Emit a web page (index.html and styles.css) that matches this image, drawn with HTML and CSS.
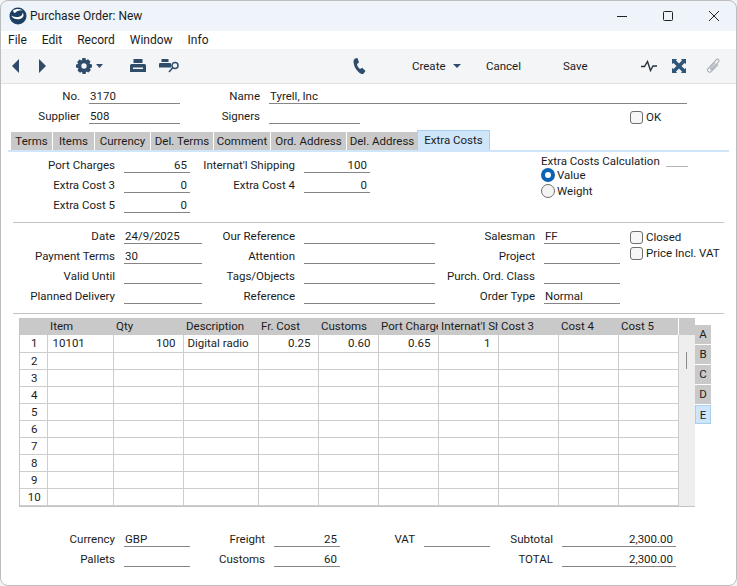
FILE: index.html
```html
<!DOCTYPE html>
<html lang="en">
<head>
    <meta charset="UTF-8">
    <meta name="viewport" content="width=device-width, initial-scale=1.0">
    <title>Purchase Order: New</title>
    <link rel="stylesheet" href="styles.css">
</head>
<body>
    <div class="window">
        <div class="titlebar">
            <svg class="logo" width="18" height="18" viewBox="0 0 18 18">
                <circle cx="9" cy="9" r="8.5" fill="#1d3f63"/>
                <path d="M4 3.500C7 1.500 11 1.500 14.500 3.500C11.500 3 8.500 3.500 6.500 5.500C5.500 6.500 4.500 5.500 4 3.500Z" fill="#fff"/>
                <path d="M2 8.500C4.500 12.500 9.500 13.500 13 11C15 9.500 15 7 13.500 5.500C14 8.500 10.500 10.500 7 10C5 9.700 3.200 9.300 2 8.500Z" fill="#fff"/>
            </svg>
            <span class="title">Purchase Order: New</span>
            <div class="win-btn">
                <svg width="12" height="12" viewBox="0 0 12 12"><path d="M1 6.500H11" stroke="#222" stroke-width="1"/></svg>
            </div>
            <div class="win-btn">
                <svg width="12" height="12" viewBox="0 0 12 12"><rect x="1.500" y="1.500" width="9" height="9" rx="1" fill="none" stroke="#222"/></svg>
            </div>
            <div class="win-btn">
                <svg width="12" height="12" viewBox="0 0 12 12"><path d="M1 1L11 11M11 1L1 11" stroke="#222" stroke-width="1"/></svg>
            </div>
        </div>

        <div class="menubar">
            <span>File</span>
            <span>Edit</span>
            <span>Record</span>
            <span>Window</span>
            <span>Info</span>
        </div>

        <div class="toolbar">
            <svg width="8" height="14" viewBox="0 0 8 14"><path d="M7 0V14L0 7Z" fill="#2f4d6b"/></svg>
            <svg width="8" height="14" viewBox="0 0 8 14"><path d="M0 0V14L7 7Z" fill="#2f4d6b"/></svg>
            <div class="tool-pair">
                <svg width="16" height="16" viewBox="0 0 16 16">
                    <path d="M6.500 0H9.500L10 2.200L12 1.200L14.500 3.500L13.500 5.700L16 6.500V9.500L13.800 10L14.800 12L12.500 14.500L10.300 13.500L9.500 16H6.500L6 13.800L4 14.800L1.500 12.500L2.500 10.300L0 9.500V6.500L2.200 6L1.200 4L3.500 1.500L5.700 2.500Z" fill="#2f4d6b"/>
                    <circle cx="8" cy="8" r="2.700" fill="#f4f5f6"/>
                </svg>
                <svg width="7" height="4" viewBox="0 0 7 4"><path d="M0 0H7L3.500 4Z" fill="#2f4d6b"/></svg>
            </div>
            <svg width="16" height="14" viewBox="0 0 16 14">
                <path d="M3.500 0H12.500V4H3.500ZM1.500 5H14.500Q16 5 16 6.500V13H0V6.500Q0 5 1.500 5Z" fill="#2f4d6b"/>
                <rect x="3" y="8.500" width="10" height="1.500" fill="#f4f5f6"/>
            </svg>
            <svg width="21" height="15" viewBox="0 0 21 15">
                <path d="M2.500 0H9.500V3H2.500ZM1 4H11Q12 4 12 5V8.500H0V5Q0 4 1 4Z" fill="#2f4d6b"/>
                <circle cx="16" cy="6.500" r="3" fill="none" stroke="#2f4d6b" stroke-width="1.500"/>
                <path d="M13.800 8.800L10 13" stroke="#2f4d6b" stroke-width="1.500"/>
            </svg>
            <svg width="13" height="17" viewBox="0 0 13 17">
                <path d="M2 .500L4.500 0L6 4.500L4 6C4.300 8 5.500 10 7 11L9.200 9.800L12.500 13L10.500 15.800C9 16.500 7.500 15.800 5.500 14C2.500 11 .500 7.500 .500 3.500Q.600 1.500 2 .500Z" fill="#2f4d6b"/>
            </svg>
            <div class="tool-pair">
                <span>Create</span>
                <svg class="caret-gap" width="8" height="4" viewBox="0 0 8 4"><path d="M0 0H8L4 4Z" fill="#2f4d6b"/></svg>
            </div>
            <span>Cancel</span>
            <span>Save</span>
            <svg width="16" height="12" viewBox="0 0 16 12"><path d="M0 6.500H3.500L6.500 1.500L9.500 10.500L12 6H16" fill="none" stroke="#26333f" stroke-width="1.400"/></svg>
            <svg width="14" height="14" viewBox="0 0 14 14">
                <path d="M0 0H5L4 1.500L7 4.500L10 1.500L9 0H14V5L12.500 4L9.500 7L12.500 10L14 9V14H9L10 12.500L7 9.500L4 12.500L5 14H0V9L1.500 10L4.500 7L1.500 4L0 5Z" fill="#2f5577"/>
            </svg>
            <svg width="15" height="16" viewBox="0 0 15 16">
                <path d="M9 5L4.500 10C3.800 10.800 4.800 11.800 5.600 11L12.500 3.800C14 2.200 11.800 .2 10.200 1.800L2.200 10.300C.2 12.500 3 15.500 5.200 13.500L12 6.500" fill="none" stroke="#a9b0b7" stroke-width="1.100"/>
            </svg>
        </div>

        <div class="form">
            <div class="grid head-grid">
                <label>No.</label><div class="fld">3170</div>
                <label>Name</label><div class="fld span-3">Tyrell, Inc</div>
                <label>Supplier</label><div class="fld">508</div>
                <label>Signers</label><div class="fld"></div>
                <div></div>
                <div class="check"><i class="box"></i>OK</div>
            </div>

            <div class="tabs">
                <span class="tab">Terms</span>
                <span class="tab">Items</span>
                <span class="tab">Currency</span>
                <span class="tab">Del. Terms</span>
                <span class="tab">Comment</span>
                <span class="tab">Ord. Address</span>
                <span class="tab">Del. Address</span>
                <span class="tab active">Extra Costs</span>
            </div>

            <div class="grid extra-grid">
                <label>Port Charges</label><div class="fld num">65</div>
                <label>Internat'l Shipping</label><div class="fld num">100</div>
                <div class="calc">
                    <div class="calc-title">Extra Costs Calculation<span class="calc-line"></span></div>
                    <div class="radio"><i class="dot on"></i>Value</div>
                    <div class="radio"><i class="dot"></i>Weight</div>
                </div>
                <label>Extra Cost 3</label><div class="fld num">0</div>
                <label>Extra Cost 4</label><div class="fld num">0</div>
                <label>Extra Cost 5</label><div class="fld num">0</div>
            </div>

            <hr class="sep">

            <div class="grid date-grid">
                <label>Date</label><div class="fld">24/9/2025</div>
                <label>Our Reference</label><div class="fld"></div>
                <label>Salesman</label><div class="fld">FF</div>
                <div class="checks">
                    <div class="check"><i class="box"></i>Closed</div>
                    <div class="check"><i class="box"></i>Price Incl. VAT</div>
                </div>
                <label>Payment Terms</label><div class="fld">30</div>
                <label>Attention</label><div class="fld"></div>
                <label>Project</label><div class="fld"></div>
                <label>Valid Until</label><div class="fld"></div>
                <label>Tags/Objects</label><div class="fld"></div>
                <label>Purch. Ord. Class</label><div class="fld"></div>
                <label>Planned Delivery</label><div class="fld"></div>
                <label>Reference</label><div class="fld"></div>
                <label>Order Type</label><div class="fld">Normal</div>
            </div>

            <hr class="sep">

            <div class="matrix">
                <div class="matrix-box">
                    <table>
                        <colgroup>
                            <col class="c-no"><col class="c-item"><col class="c-qty"><col class="c-desc">
                            <col class="c-n"><col class="c-n"><col class="c-n"><col class="c-n">
                            <col class="c-n"><col class="c-n"><col class="c-n">
                        </colgroup>
                        <thead>
                            <tr><th></th><th>Item</th><th>Qty</th><th>Description</th><th>Fr. Cost</th><th>Customs</th><th>Port Charge</th><th>Internat'l Shipping</th><th>Cost 3</th><th>Cost 4</th><th>Cost 5</th></tr>
                        </thead>
                        <tbody>
                            <tr><td class="no">1</td><td class="item">10101</td><td class="r">100</td><td class="desc">Digital radio</td><td class="r">0.25</td><td class="r">0.60</td><td class="r">0.65</td><td class="r">1</td><td></td><td></td><td></td></tr>
                            <tr><td class="no">2</td><td></td><td></td><td></td><td></td><td></td><td></td><td></td><td></td><td></td><td></td></tr>
                            <tr><td class="no">3</td><td></td><td></td><td></td><td></td><td></td><td></td><td></td><td></td><td></td><td></td></tr>
                            <tr><td class="no">4</td><td></td><td></td><td></td><td></td><td></td><td></td><td></td><td></td><td></td><td></td></tr>
                            <tr><td class="no">5</td><td></td><td></td><td></td><td></td><td></td><td></td><td></td><td></td><td></td><td></td></tr>
                            <tr><td class="no">6</td><td></td><td></td><td></td><td></td><td></td><td></td><td></td><td></td><td></td><td></td></tr>
                            <tr><td class="no">7</td><td></td><td></td><td></td><td></td><td></td><td></td><td></td><td></td><td></td><td></td></tr>
                            <tr><td class="no">8</td><td></td><td></td><td></td><td></td><td></td><td></td><td></td><td></td><td></td><td></td></tr>
                            <tr><td class="no">9</td><td></td><td></td><td></td><td></td><td></td><td></td><td></td><td></td><td></td><td></td></tr>
                            <tr><td class="no">10</td><td></td><td></td><td></td><td></td><td></td><td></td><td></td><td></td><td></td><td></td></tr>
                        </tbody>
                    </table>
                    <div class="scroll"><span class="thumb"></span></div>
                </div>
                <div class="side-tabs">
                    <span>A</span>
                    <span>B</span>
                    <span>C</span>
                    <span>D</span>
                    <span class="active">E</span>
                </div>
            </div>

            <div class="grid foot-grid">
                <label>Currency</label><div class="fld">GBP</div>
                <label>Freight</label><div class="fld num">25</div>
                <label>VAT</label><div class="fld"></div>
                <label>Subtotal</label><div class="fld num">2,300.00</div>
                <label>Pallets</label><div class="fld"></div>
                <label>Customs</label><div class="fld num">60</div>
                <div></div><div></div>
                <label>TOTAL</label><div class="fld num">2,300.00</div>
            </div>
        </div>
    </div>
</body>
</html>
```

FILE: styles.css
```css
* {
    box-sizing: border-box;
}
body {
    margin: 0;
    background: #f3f3f3;
    font-family: Roboto, 'Noto Sans', sans-serif;
    font-size: 11.5px;
    color: #1c1c1c;
}
.window {
    width: 737px;
    height: 586px;
    background: #fff;
    border-radius: 8px;
    overflow: hidden;
    outline: 1px solid #bdbdbd;
    outline-offset: -1px;
}
.titlebar {
    display: flex;
    align-items: center;
    height: 31px;
    padding-left: 9px;
    background: #eef4f9;
}
.logo {
    margin-right: 3px;
}
.title {
    flex: 1;
    font-size: 12px;
}
.win-btn {
    display: flex;
    align-items: center;
    justify-content: center;
    width: 46px;
    height: 31px;
}
.menubar {
    display: flex;
    gap: 15px;
    align-items: center;
    height: 18px;
    padding-left: 8px;
    font-size: 12px;
}
.toolbar {
    display: grid;
    grid-template-columns: 27px 37px 54px 29px 194px 59px 74px 77px 78px 31px 34px 20px;
    align-items: center;
    justify-items: start;
    height: 35px;
    padding-left: 12px;
    background: #f4f5f6;
    border-bottom: 1px solid #e2e2e2;
}
.tool-pair {
    display: flex;
    align-items: center;
    gap: 4px;
}
.caret-gap {
    margin-left: 3px;
}
.grid {
    display: grid;
    grid-auto-rows: 20px;
}
.grid label {
    padding: 5px 9px 0 0;
    line-height: 15px;
    text-align: right;
    white-space: nowrap;
}
.fld {
    padding: 5px 0 0 1px;
    line-height: 14px;
    border-bottom: 1px solid #858585;
    white-space: nowrap;
}
.num {
    padding-right: 3px;
    text-align: right;
}
.span-3 {
    grid-column: span 3;
}
.head-grid {
    grid-template-columns: 89px 91px 89px 91px 270px 57px;
}
.check {
    display: flex;
    align-items: center;
    gap: 3px;
    height: 16px;
    white-space: nowrap;
}
.head-grid .check {
    height: 20px;
    padding-top: 6px;
}
.box {
    width: 13px;
    height: 13px;
    background: #f6f6f6;
    border: 1px solid #6f6f6f;
    border-radius: 3px;
}
.tabs {
    display: grid;
    grid-template-columns: 41px 41px 55px 62px 56px 75px 70px 72px;
    column-gap: 1px;
    align-items: end;
    height: 22px;
    margin: 6px 8px 0;
    padding-left: 3px;
    border-bottom: 2px solid #cfe5fa;
}
.tab {
    height: 18px;
    line-height: 19px;
    text-align: center;
    background: #c9c9c9;
    white-space: nowrap;
}
.tab.active {
    height: 20px;
    margin-left: -1px;
    line-height: 18px;
    background: #cfe5fa;
    border: 1px solid #a9cfee;
    border-bottom: none;
}
.extra-grid {
    grid-template-columns: 124px 66px 114px 66px 361px;
    margin-top: 1px;
}
.calc {
    grid-column: 5;
    grid-row: 1 / span 3;
    display: flex;
    flex-direction: column;
    padding-left: 171px;
}
.calc-title {
    display: flex;
    align-items: flex-end;
    height: 14px;
    line-height: 12px;
    white-space: nowrap;
}
.calc-line {
    width: 22px;
    height: 5px;
    margin-left: 6px;
    border-bottom: 1px solid #b5b5b5;
}
.radio {
    display: flex;
    align-items: center;
    gap: 2px;
    height: 16px;
}
.dot {
    width: 14px;
    height: 14px;
    background: #f4f4f4;
    border: 1px solid #6f6f6f;
    border-radius: 50%;
}
.dot.on {
    background: #fff;
    border: 4px solid #0a62b4;
}
.sep {
    height: 1px;
    margin: 9px 13px 1px;
    background: #c4c4c4;
    border: none;
}
.date-grid {
    grid-template-columns: 124px 78px 102px 131px 109px 76px 110px;
}
.checks {
    grid-column: 7;
    grid-row: 1 / span 3;
    display: flex;
    flex-direction: column;
    padding: 5px 0 0 10px;
}
.matrix {
    display: flex;
    align-items: flex-start;
    margin: 4px 0 0 19px;
}
.matrix-box {
    display: flex;
    width: 676px;
    background: #eee;
    border-bottom: 1px solid #c4c4c4;
    border-left: 1px solid #c4c4c4;
}
table {
    width: 657px;
    border-collapse: collapse;
    table-layout: fixed;
    background: #fff;
}
.c-no { width: 27px; }
.c-item { width: 66px; }
.c-qty { width: 70px; }
.c-desc { width: 75px; }
.c-n { width: 60px; }
th {
    height: 17px;
    padding: 0 0 1px 3px;
    overflow: hidden;
    font-weight: normal;
    text-align: left;
    white-space: nowrap;
    background: #c9c9c9;
}
td {
    height: 17px;
    padding: 0;
    overflow: hidden;
    white-space: nowrap;
    border-right: 1px solid #cdcdcd;
    border-bottom: 1px solid #cdcdcd;
}
td.no {
    padding-left: 2px;
    text-align: center;
}
td.item {
    padding-left: 5px;
}
td.desc {
    padding-left: 4px;
}
td.r {
    padding-right: 7px;
    text-align: right;
}
.scroll {
    flex: 1;
}
.scroll::before {
    content: "";
    display: block;
    height: 17px;
    background: #c9c9c9;
}
.thumb {
    display: block;
    width: 1px;
    height: 17px;
    margin: 17px 0 0 7px;
    background: #8a8a8a;
}
.side-tabs {
    display: flex;
    flex-direction: column;
    gap: 1px;
    width: 16px;
    margin-top: 7px;
}
.side-tabs span {
    height: 19px;
    line-height: 18px;
    text-align: center;
    background: #c9c9c9;
}
.side-tabs .active {
    background: #cfe5fa;
    border: 1px solid #a9cfee;
}
.foot-grid {
    grid-template-columns: 124px 66px 84px 66px 84px 66px 72px 114px;
    margin-top: 20px;
}
```
